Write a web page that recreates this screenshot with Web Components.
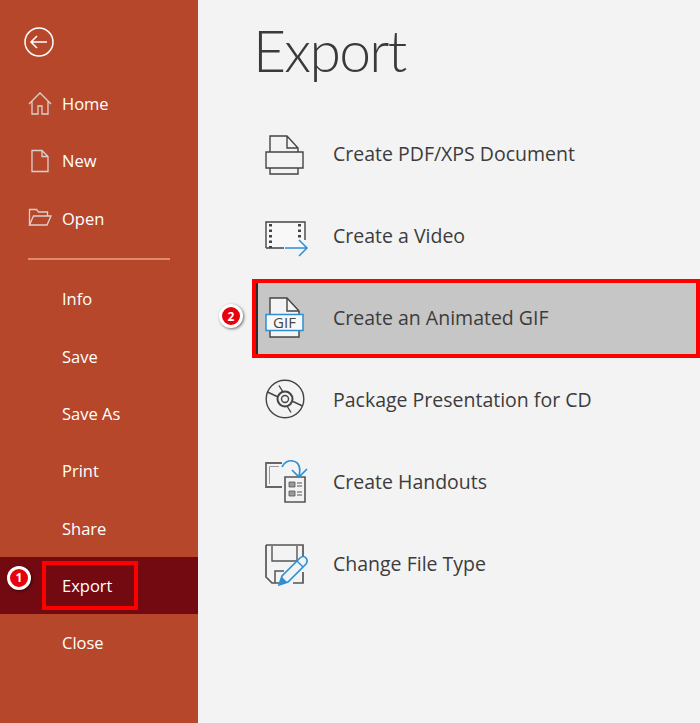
<!DOCTYPE html>
<html lang="en">
<head>
<meta charset="utf-8">
<title>Export</title>
<style>
  html, body { margin: 0; padding: 0; }
  body { width: 700px; height: 723px; overflow: hidden; background: #f3f3f3; font-family: "Open Sans", "Noto Sans", sans-serif; }
</style>
</head>
<body>
<app-shell>
  <side-bar slot="side">
    <nav-item label="Home" slot="top">
      <svg slot="icon" width="24" height="24" viewBox="0 0 24 24" fill="none" stroke="#d9d2cf" stroke-width="1.3"><path d="M1 13 12 2l11 11M4 10.500V23h6v-8h4v8h6V10.500"/></svg>
    </nav-item>
    <nav-item label="New" slot="top">
      <svg slot="icon" width="24" height="24" viewBox="0 0 24 24" fill="none" stroke="#d9d2cf" stroke-width="1.3"><path d="M4 1.500h10l6 6v15H4zM14 1.500v6h6"/></svg>
    </nav-item>
    <nav-item label="Open" slot="top">
      <svg slot="icon" width="24" height="24" viewBox="0 0 24 24" fill="none" stroke="#d9d2cf" stroke-width="1.3"><path d="M1.500 19V3.500h7l2 2.500h9v4M1.500 19l4-9H23l-4 9z"/></svg>
    </nav-item>
    <nav-item label="Info"></nav-item>
    <nav-item label="Save"></nav-item>
    <nav-item label="Save As"></nav-item>
    <nav-item label="Print"></nav-item>
    <nav-item label="Share"></nav-item>
    <nav-item label="Export" active marked badge="1"></nav-item>
    <nav-item label="Close"></nav-item>
  </side-bar>

  <export-panel slot="main" heading="Export">
    <export-row label="Create PDF/XPS Document">
      <svg slot="icon" style="margin-top:3px" width="39" height="40" viewBox="0 0 39 40" fill="none" stroke="#444" stroke-width="1.4"><path d="M5 17V1h17l11 12v4M22 1v12h11"/><path d="M1 17h37v16H1z"/><path d="M5 33v6h28v-6"/></svg>
    </export-row>
    <export-row label="Create a Video">
      <svg slot="icon" style="margin-top:9px" width="44" height="37" viewBox="0 0 44 37" fill="none"><path d="M1 1h39v26H1z" fill="#f8f8f8" stroke="none"/><path d="M1 27V1h39v18M1 27h18" stroke="#444" stroke-width="1.400"/><path d="M5.500 3v24M34.500 3v16" stroke="#444" stroke-width="3" stroke-dasharray="2.500 3"/><path d="M20 27h22M34 19l8 8-8 8" stroke="#2b8fd6" stroke-width="1.500"/></svg>
    </export-row>
    <export-row label="Create an Animated GIF" selected badge="2">
      <svg slot="icon" width="39" height="41" viewBox="0 0 39 41"><path d="M5 40V1h17l12 13v26z" fill="#f4f4f4" stroke="#444" stroke-width="1.400"/><path d="M22 1v13h12" fill="none" stroke="#444" stroke-width="1.400"/><rect x="1" y="17.500" width="37" height="16" fill="#f8f8f8" stroke="#2b8fd6" stroke-width="1.500"/><text x="19.500" y="31" text-anchor="middle" font-family="Open Sans, sans-serif" font-size="15" fill="#444">GIF</text></svg>
    </export-row>
    <export-row label="Package Presentation for CD">
      <svg slot="icon" width="40" height="40" viewBox="0 0 40 40" fill="none" stroke="#444" stroke-width="1.400"><circle cx="20" cy="20" r="18.800"/><circle cx="20" cy="20" r="7.500" stroke-width="2"/><circle cx="20" cy="20" r="3.500"/><path d="M14 6.500 18 13M26 33.500 22 27M2.500 13 12 17.500M37.500 27 28 22.500"/></svg>
    </export-row>
    <export-row label="Create Handouts">
      <svg slot="icon" width="43" height="44" viewBox="0 0 43 44" fill="none"><path d="M17 4H1v24h16" stroke="#666" stroke-width="1.800"/><path d="M4.500 25V7.500H14" stroke="#999" stroke-width="1"/><path d="M20 18h20v25H20z" stroke="#555" stroke-width="1.600" fill="#f3f3f3"/><path d="M24 23h6v5h-6zM24 32h6v5h-6z" fill="#999" stroke="#555" stroke-width=".8"/><path d="M32 24h5M32 27h5M32 33h5M32 36h5" stroke="#555" stroke-width="1.200"/><path d="M17 8c2-5 7-7 11-6 6 1 8 7 6 15" stroke="#2b8fd6" stroke-width="1.700"/><path d="M27 11l7 7 8-8" stroke="#2b8fd6" stroke-width="1.700"/></svg>
    </export-row>
    <export-row label="Change File Type">
      <svg slot="icon" style="margin-top:3px" width="44" height="42" viewBox="0 0 44 42" fill="none"><path d="M1 1h37v12M1 1v32l6 6h10M38 28v11h-10" stroke="#555" stroke-width="1.700"/><path d="M7 2v15h25V2" stroke="#555" stroke-width="1.400"/><path d="M10 39V27h9" stroke="#555" stroke-width="1.500"/><path d="M14 41l3-9 18-18c2-2 4.500-2 6 0s1.500 4 0 6L23 38z" fill="#f3f3f3" stroke="#2b8fd6" stroke-width="1.600"/><path d="M14 41l3-8 5 5z" fill="#2b8fd6"/><path d="M32 17l6 6" stroke="#2b8fd6" stroke-width="1.400"/></svg>
    </export-row>
  </export-panel>
</app-shell>

<script>
// shell: coloured column on the left, content on the right
class AppShell extends HTMLElement {
  constructor() {
    super();
    this.attachShadow({ mode: "open" });
    this.shadowRoot.innerHTML = `
      <style>
        :host { display: grid; grid-template-columns: 198px 1fr; width: 700px; height: 723px; }
      </style>
      <slot name="side"></slot>
      <slot name="main"></slot>
    `;
  }
}

class SideBar extends HTMLElement {
  constructor() {
    super();
    this.attachShadow({ mode: "open" });
    this.shadowRoot.innerHTML = `
      <style>
        :host { display: block; height: 723px; background: #b7472a; color: #fff; overflow: hidden; }
        .back { display: block; margin: 27px 0 0 24px; height: 30px; }
        .top { margin-top: 17.800px; }
        hr { border: 0; height: 2px; background: #e08a6e; margin: 10.700px 28px 10.300px 28px; }
      </style>
      <svg class="back" width="30" height="30" viewBox="0 0 30 30" fill="none" stroke="#fff" stroke-width="1.500">
        <circle cx="15" cy="15" r="14"/><path d="M23 15H7M13 9l-6 6 6 6"/>
      </svg>
      <div class="top"><slot name="top"></slot></div>
      <hr>
      <slot></slot>
    `;
  }
}

class NavItem extends HTMLElement {
  constructor() {
    super();
    this.attachShadow({ mode: "open" });
    this.shadowRoot.innerHTML = `
      <style>
        :host { display: flex; align-items: center; position: relative; height: 57.400px; padding-left: 62px; font-size: 16.500px; color: #fff; }
        :host([active]) { background: #730a12; }
        .icon { position: absolute; left: 28px; top: 50%; transform: translateY(-50%); display: flex; }
        .mark { display: none; position: absolute; left: 42px; top: 4px; width: 88px; height: 41px; border: 4px solid #f00; }
        :host([marked]) .mark { display: block; }
        step-badge { position: absolute; left: 7px; top: 9px; }
      </style>
      <span class="icon"><slot name="icon"></slot></span>
      <span class="label"></span>
      <span class="mark"></span>
    `;
  }
  connectedCallback() {
    this.shadowRoot.querySelector(".label").textContent = this.getAttribute("label");
    if (this.hasAttribute("badge")) {
      const badge = document.createElement("step-badge");
      badge.textContent = this.getAttribute("badge");
      this.shadowRoot.appendChild(badge);
    }
  }
}

class ExportPanel extends HTMLElement {
  constructor() {
    super();
    this.attachShadow({ mode: "open" });
    this.shadowRoot.innerHTML = `
      <style>
        :host { display: block; padding-left: 58px; background: #f3f3f3; color: #333; }
        h1 { margin: 0 0 0 -3px; padding-top: 12px; height: 100px; font-family: Lato, "Open Sans", sans-serif; font-size: 57px; letter-spacing: -1.700px; line-height: 76px; font-weight: 300; color: #3a3a3a; }
        .rows { display: flex; flex-direction: column; }
      </style>
      <h1></h1>
      <div class="rows"><slot></slot></div>
    `;
  }
  connectedCallback() {
    this.shadowRoot.querySelector("h1").textContent = this.getAttribute("heading");
  }
}

class ExportRow extends HTMLElement {
  constructor() {
    super();
    this.attachShadow({ mode: "open" });
    this.shadowRoot.innerHTML = `
      <style>
        :host { display: block; position: relative; height: 82px; font-size: 19.500px; color: #3c3c3c; }
        .row { display: flex; align-items: center; height: 72px; margin-top: 5px; padding-left: 9px; box-sizing: border-box; }
        .icon { width: 68px; display: flex; align-items: center; flex: none; }
        :host([selected]) .row { background: #c6c6c6; border-left: 2px solid #2b2b2b; padding-left: 7px; padding-bottom: 2px; margin-top: 6px; margin-right: 4px; }
        .mark { display: none; position: absolute; left: -4px; right: 0; top: 3px; height: 79px; box-sizing: border-box; border: 4px solid #f00; }
        :host([selected]) .mark { display: block; }
        step-badge { position: absolute; left: -37px; top: 28px; }
      </style>
      <div class="row">
        <span class="icon"><slot name="icon"></slot></span>
        <span class="label"></span>
      </div>
      <span class="mark"></span>
    `;
  }
  connectedCallback() {
    this.shadowRoot.querySelector(".label").textContent = this.getAttribute("label");
    if (this.hasAttribute("badge")) {
      const badge = document.createElement("step-badge");
      badge.textContent = this.getAttribute("badge");
      this.shadowRoot.appendChild(badge);
    }
  }
}

// numbered red dot with a white ring
class StepBadge extends HTMLElement {
  constructor() {
    super();
    this.attachShadow({ mode: "open" });
    this.shadowRoot.innerHTML = `
      <style>
        :host { display: flex; align-items: center; justify-content: center; width: 18px; height: 18px; border: 3px solid #fff; border-radius: 50%; background: #e8000b; color: #fff; font: 700 12px "Open Sans", sans-serif; box-shadow: 1px 1px 3px rgba(0,0,0,.55); }
      </style>
      <slot></slot>
    `;
  }
}

customElements.define("app-shell", AppShell);
customElements.define("side-bar", SideBar);
customElements.define("nav-item", NavItem);
customElements.define("export-panel", ExportPanel);
customElements.define("export-row", ExportRow);
customElements.define("step-badge", StepBadge);
</script>
</body>
</html>
